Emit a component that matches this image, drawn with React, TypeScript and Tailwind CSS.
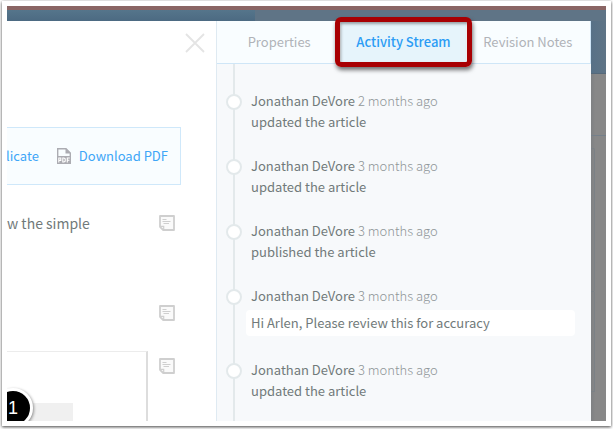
import type { ReactNode } from "react"
import { clsx } from "clsx"

type Activity = {
  id: number
  user: string
  time: string
  action?: string
  comment?: string
}

const activities: Activity[] = [
  { id: 1, user: "Jonathan DeVore", time: "2 months ago", action: "updated the article" },
  { id: 2, user: "Jonathan DeVore", time: "3 months ago", action: "updated the article" },
  { id: 3, user: "Jonathan DeVore", time: "3 months ago", action: "published the article" },
  { id: 4, user: "Jonathan DeVore", time: "3 months ago", comment: "Hi Arlen, Please review this for accuracy" },
  { id: 5, user: "Jonathan DeVore", time: "3 months ago", action: "updated the article" },
]

const tabs = ["Properties", "Activity Stream", "Revision Notes"]

function CloseIcon() {
  return (
    <svg width="20" height="20" viewBox="0 0 20 20" fill="none" stroke="#e4e4e4" strokeWidth="1.8">
      <path d="M1 1L19 19M19 1L1 19" />
    </svg>
  )
}

function PdfIcon() {
  return (
    <svg width="14" height="16" viewBox="0 0 14 16" fill="none">
      <path d="M0.7 8V0.7H9L13.3 5V8" stroke="#acacb2" strokeWidth="1.4" />
      <path d="M8.5 0V5.5H14Z" fill="#acacb2" />
      <path d="M0 8H14V16H0Z" fill="#acacb2" />
      <path
        d="M1.8 14.5V10H3.8V12.4H1.8M5.8 10V14H7L8.2 13.2V10.8L7 10ZM10.3 14.5V10H12.8M10.3 12.2H12.4"
        stroke="#fff"
        strokeWidth="1.1"
      />
    </svg>
  )
}

function NoteIcon() {
  return (
    <svg width="16" height="16" viewBox="0 0 16 16" fill="none" stroke="#cfcfcf">
      <path d="M1 11.8V1H15V15H4.2Z" fill="#fafafa" strokeWidth="1.8" strokeLinejoin="round" />
      <path d="M1.2 11.3H4.7V14.8" strokeWidth="1.2" />
      <path d="M3.5 4.5H7.5M3.5 6.5H11.5M4.5 8.5H10" strokeWidth="1" />
    </svg>
  )
}

function NoteButton() {
  return (
    <button type="button" aria-label="Add note" className="shrink-0">
      <NoteIcon />
    </button>
  )
}

function ToolbarLink({ children }: { children: ReactNode }) {
  return (
    <a href="#" className="flex shrink-0 items-center gap-2 text-[13px] leading-5 text-[#3fa6f7]">
      {children}
    </a>
  )
}

function ArticlePane() {
  return (
    <main className="flex w-[209px] shrink-0 flex-col overflow-hidden bg-white">
      <div className="flex justify-end pt-3 pr-[11px]">
        <button type="button" aria-label="Close">
          <CloseIcon />
        </button>
      </div>

      {/* Article toolbar */}
      <div className="mt-[74px] mr-[35px] flex h-[58px] shrink-0 items-center justify-end gap-[18px] overflow-hidden border-y border-r border-[#cfe8fa] bg-[#f9fdff] pr-3">
        <ToolbarLink>licate</ToolbarLink>
        <ToolbarLink>
          <PdfIcon />
          Download PDF
        </ToolbarLink>
      </div>

      <div className="mt-[26px] flex shrink-0 items-center justify-between pr-[41px]">
        <p className="text-sm leading-6 whitespace-nowrap text-[#717a7a]">w the simple</p>
        <NoteButton />
      </div>

      <div className="mt-[70px] flex shrink-0 justify-end pr-[41px]">
        <NoteButton />
      </div>

      {/* Step with its picture */}
      <div className="mt-[30px] flex min-h-0 flex-1 justify-between pr-[41px]">
        <div className="relative w-[141px] overflow-hidden border-t border-r-2 border-t-[#ececec] border-r-[#dddddd] pt-[51px]">
          <div className="h-full w-[66px] bg-[#f0f0f0]" />
          <span className="absolute top-9 -left-3.5 flex size-10 items-center justify-center rounded-full border-3 border-white bg-black font-['Liberation_Sans',sans-serif] text-lg text-white shadow-[1px_1px_3px_rgba(0,0,0,0.4)]">
            1
          </span>
        </div>
        <div className="pt-1">
          <NoteButton />
        </div>
      </div>
    </main>
  )
}

function Tabs() {
  return (
    <div role="tablist" className="grid h-[43px] shrink-0 grid-cols-3 border-r border-b border-[#cfe6f7] bg-[#f9fdff]">
      {tabs.map((tab) => {
        const active = tab === "Activity Stream"
        return (
          <button
            key={tab}
            type="button"
            role="tab"
            aria-selected={active}
            className={clsx(
              "relative text-[13px] leading-5 whitespace-nowrap",
              active ? "bg-[#e6f4fb] font-medium text-[#2b9cf5]" : "text-[#b0b3b8]",
            )}
          >
            {tab}
            {active && (
              <span className="absolute -inset-x-1.5 -inset-y-1 rounded-md border-5 border-[#a80003] shadow-[1px_3px_4px_rgba(0,0,0,0.55),inset_1px_2px_3px_rgba(0,0,0,0.35)]" />
            )}
          </button>
        )
      })}
    </div>
  )
}

function ActivityItem({ user, time, action, comment }: Activity) {
  return (
    <li className="relative pl-[34px] text-[13px] text-[#717a7a]">
      <span className="absolute top-1 left-[9px] size-4 rounded-full border-2 border-[#e3e9eb] bg-white" />
      <p className="leading-[21px]">
        {user} <time className="font-light text-[#8f9698]">{time}</time>
      </p>
      {action && <p className="leading-[21px]">{action}</p>}
      {comment && (
        <p className="mt-1 mr-4 -ml-[5px] rounded-sm bg-white px-[5px] leading-[26px]">{comment}</p>
      )}
    </li>
  )
}

function ActivityPane() {
  return (
    <aside className="flex min-w-0 flex-1 flex-col border-l border-[#dfeaf2] bg-[#f7f9fb]">
      <Tabs />
      <div className="relative min-h-0 flex-1 overflow-hidden pt-[26px]">
        <div className="absolute inset-y-0 left-4 w-0.5 bg-[#e3e9eb]" />
        <ul className="flex flex-col gap-[23px]">
          {activities.map((item) => (
            <ActivityItem key={item.id} {...item} />
          ))}
        </ul>
      </div>
    </aside>
  )
}

export default function App() {
  return (
    <div className="h-screen bg-white px-0.5 pt-px pb-[3px] font-['Noto_Sans_CJK_SC',sans-serif]">
      <div className="h-full bg-white p-[5px] shadow-[0_1px_3px_rgba(0,0,0,0.75)]">
        <div className="flex h-full flex-col overflow-hidden">
          {/* Dimmed app header */}
          <div className="h-1 shrink-0 bg-[#8a6564]" />
          <div className="flex h-[11px] shrink-0">
            <div className="w-[248px] bg-linear-to-b from-[#55758b] to-[#4c6a82]" />
            <div className="flex-1 bg-[#5f7486]" />
          </div>

          <div className="flex min-h-0 flex-1">
            <ArticlePane />
            <ActivityPane />

            {/* Dimmed page behind the overlay */}
            <div className="flex w-[15px] flex-col">
              <div className="h-[53px] border-b border-[#56697a] bg-linear-to-r from-[#577187] to-[#5f7486]" />
              <div className="flex-1 bg-linear-to-r from-[#7f8183] to-[#888888] to-30%">
                <div className="h-[62px] border-b border-[#75808a]" />
                <div className="mt-3 h-[144px] w-1 rounded-r-xs border-y border-r border-[#7b8186]" />
                <div className="h-[100px] w-1 border-r border-b border-[#7b8186]" />
              </div>
            </div>
          </div>
        </div>
      </div>
    </div>
  )
}
